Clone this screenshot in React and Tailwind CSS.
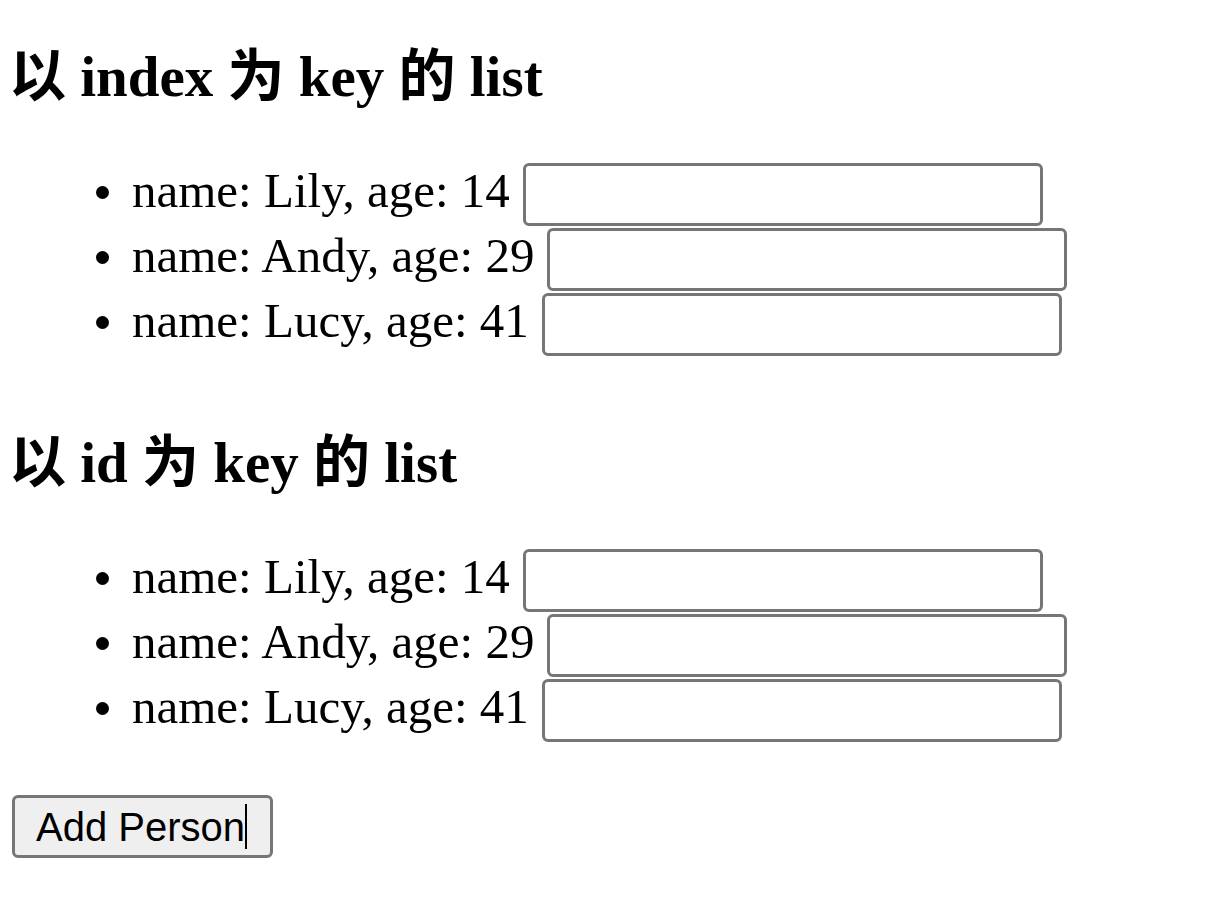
const people = [
  { id: 1, name: 'Lily', age: 14 },
  { id: 2, name: 'Andy', age: 29 },
  { id: 3, name: 'Lucy', age: 41 },
];

function PersonList({ byIndex }) {
  return (
    <ul className="mt-[53px] pl-[84px]">
      {people.map((p, i) => (
        <li key={byIndex ? i : p.id} className="flex items-start h-[65px]">
          <span className="mt-[23px] mr-[23px] w-[13px] h-[13px] rounded-full bg-black shrink-0" />
          <span className="mt-[1px] leading-[53px] text-[49px] whitespace-nowrap">
            name: {p.name}, age: {p.age}
          </span>
          <input
            type="text"
            className="ml-[13px] w-[520px] h-[63px] border-[3px] border-[#767676] rounded-[6px] bg-white px-[6px] text-[40px] outline-none"
          />
        </li>
      ))}
    </ul>
  );
}

export default function App() {
  return (
    <div className="min-h-screen bg-white text-black pl-[12px] font-['Liberation_Serif','Noto_Sans_CJK_SC',serif]">
      <h2 className="mt-[44px] -ml-[3px] text-[57px] leading-[66px] font-bold whitespace-nowrap">以 index 为 key 的 list</h2>
      <PersonList byIndex />
      <h2 className="mt-[72px] -ml-[3px] text-[57px] leading-[66px] font-bold whitespace-nowrap">以 id 为 key 的 list</h2>
      <PersonList />
      <button className="mt-[51px] h-[63px] flex items-center pl-[21px] pr-[23px] border-[3px] border-[#767676] rounded-[6px] bg-[#efefef] font-['Liberation_Sans',sans-serif] text-[40px] leading-none">
        Add Person
        <span className="w-[2px] h-[45px] bg-black" />
      </button>
    </div>
  );
}
